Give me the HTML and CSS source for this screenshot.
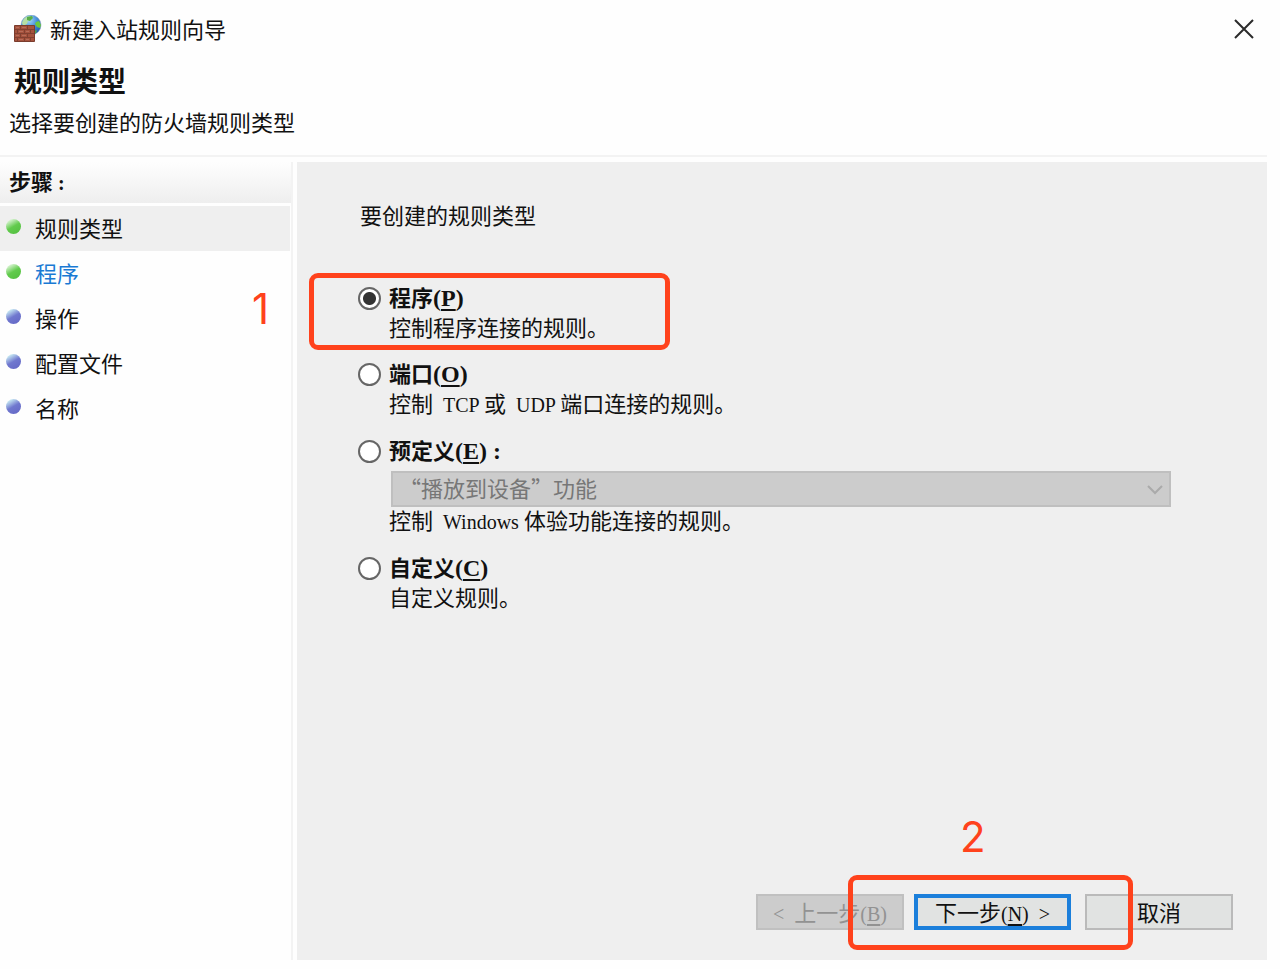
FILE: index.html
```html
<!DOCTYPE html>
<html lang="zh-CN">
<head>
    <meta charset="UTF-8">
    <meta name="viewport" content="width=device-width, initial-scale=1.0">
    <title>新建入站规则向导</title>
    <link rel="stylesheet" href="styles.css">
</head>
<body>
    <div class="wizard">
        <header class="header">
            <div class="title-bar">
                <svg class="app-icon" width="28" height="28" viewBox="0 0 28 28" aria-hidden="true">
                    <defs>
                        <radialGradient id="globe" cx="40%" cy="25%" r="75%">
                            <stop offset="0" stop-color="#a9dcf8"/>
                            <stop offset="0.5" stop-color="#4a92dc"/>
                            <stop offset="1" stop-color="#2258ae"/>
                        </radialGradient>
                    </defs>
                    <circle cx="17" cy="10" r="10" fill="url(#globe)" stroke="#7f9cb8" stroke-width="0.5"/>
                    <path d="M8 8c1-4 4-7 8-7l3 1-2 3-3 1-1 3-4 2z" fill="#b5dfa4"/>
                    <path d="M13 2l5-1 1 2-3 3-3-1z" fill="#56ae49"/>
                    <path d="M22 7l3-1 2 4-1 3-3-1-2-3z" fill="#6bc93f"/>
                    <path d="M20 16l3-1-1 3-2 1z" fill="#54a747"/>
                    <path d="M0.500 10.500h20v16h-20z" fill="#a5523d" stroke="#7a3c2d"/>
                    <path d="M1 14.500h19M1 18.500h19M1 22.500h19M6.500 11v3M13.500 11v3M3.500 15v3M10.500 15v3M16.500 15v3M6.500 19v3M13.500 19v3M3.500 23v3M10.500 23v3M16.500 23v3" stroke="#824030" fill="none"/>
                    <path d="M2 12.500h3M8 12.500h4M5 16.500h4M12 16.500h3M2 20.500h3M8 20.500h4M5 24.500h4M12 24.500h3" stroke="#b66c58" fill="none"/>
                </svg>
                <span class="title">新建入站规则向导</span>
                <button type="button" class="close" aria-label="关闭">
                    <svg width="20" height="20" viewBox="0 0 20 20" aria-hidden="true">
                        <path d="M1 1l18 18M19 1L1 19" stroke="#2b2b2b" stroke-width="2" fill="none"/>
                    </svg>
                </button>
            </div>
            <h1>规则类型</h1>
            <p class="subtitle">选择要创建的防火墙规则类型</p>
        </header>

        <div class="content">
            <nav class="steps">
                <h2>步骤<span class="latin"> :</span></h2>
                <ul>
                    <li class="done active"><span class="dot"></span>规则类型</li>
                    <li class="done"><span class="dot"></span><a href="#program">程序</a></li>
                    <li><span class="dot"></span>操作</li>
                    <li><span class="dot"></span>配置文件</li>
                    <li><span class="dot"></span>名称</li>
                </ul>
                <span class="mark-number mark-one">1</span>
            </nav>

            <main class="panel">
                <form class="rule-form">
                    <p class="question">要创建的规则类型</p>

                    <div class="option">
                        <input type="radio" name="rule" id="program" checked>
                        <label for="program">程序<span class="latin">(<u>P</u>)</span></label>
                        <p>控制程序连接的规则。</p>
                        <span class="mark-box mark-option"></span>
                    </div>

                    <div class="option">
                        <input type="radio" name="rule" id="port">
                        <label for="port">端口<span class="latin">(<u>O</u>)</span></label>
                        <p>控制<span class="latin">  TCP </span>或<span class="latin">  UDP </span>端口连接的规则。</p>
                    </div>

                    <div class="option">
                        <input type="radio" name="rule" id="predefined">
                        <label for="predefined">预定义<span class="latin">(<u>E</u>) :</span></label>
                        <div class="select-wrap">
                            <select aria-label="预定义" disabled>
                                <option>“播放到设备”功能</option>
                            </select>
                            <svg class="arrow" width="16" height="10" viewBox="0 0 16 10" aria-hidden="true">
                                <path d="M1 1l7 7 7-7" stroke="#aaaaaa" stroke-width="2" fill="none"/>
                            </svg>
                        </div>
                        <p>控制<span class="latin">  Windows </span>体验功能连接的规则。</p>
                    </div>

                    <div class="option">
                        <input type="radio" name="rule" id="custom">
                        <label for="custom">自定义<span class="latin">(<u>C</u>)</span></label>
                        <p>自定义规则。</p>
                    </div>
                </form>

                <div class="actions">
                    <button type="button" class="btn" disabled><span class="latin">&lt;  </span>上一步<span class="latin">(<u>B</u>)</span></button>
                    <div class="next-wrap">
                        <button type="button" class="btn btn-next">下一步<span class="latin">(<u>N</u>)  &gt;</span></button>
                        <span class="mark-number mark-two">2</span>
                        <span class="mark-box mark-next"></span>
                    </div>
                    <button type="button" class="btn">取消</button>
                </div>
            </main>
        </div>
    </div>
</body>
</html>
```
FILE: styles.css
```css
:root {
    --panel-color: #efefef;
    --line-color: #f3f3f3;
    --text-color: #111;
    --link-color: #1a7ad4;
    --mark-color: #ff421c;
}

* {
    box-sizing: border-box;
    margin: 0;
    padding: 0;
}

body {
    font-family: "Noto Sans CJK SC", sans-serif;
    font-size: 22px;
    line-height: 28px;
    color: var(--text-color);
    background-color: #fefefe;
}

.wizard {
    display: flex;
    flex-direction: column;
    min-height: 100vh;
    padding: 0 13px 9px 0;
}

.latin {
    font-family: "Liberation Serif", serif;
    font-size: 20px;
    line-height: 1;
    white-space: pre;
}

u {
    text-underline-offset: 3px;
}

.header {
    padding-bottom: 20px;
    border-bottom: 2px solid var(--line-color);
}

.title-bar {
    display: flex;
    align-items: center;
    gap: 8px;
    height: 58px;
    padding: 0 13px 0 14px;
}

.title {
    padding-bottom: 2px;
}

.close {
    display: flex;
    margin-left: auto;
    border: none;
    background: none;
    cursor: pointer;
}

h1 {
    padding-left: 14px;
    font-size: 28px;
    line-height: 44px;
}

.subtitle {
    padding: 5px 0 0 9px;
}

.content {
    display: flex;
    flex: 1;
    gap: 4px;
    padding-top: 5px;
}

.steps {
    position: relative;
    width: 293px;
    flex-shrink: 0;
    border-right: 2px solid var(--line-color);
}

.steps h2 {
    height: 41px;
    padding-left: 9px;
    font-size: 22px;
    line-height: 36px;
    background: linear-gradient(#fefefe, #eeeeee);
}

.steps ul {
    padding: 3px 1px 0 0;
    list-style: none;
}

.steps li {
    display: flex;
    align-items: center;
    gap: 14px;
    height: 45px;
    padding: 0 0 4px 6px;
}

.steps .active {
    background-color: var(--panel-color);
}

.steps a {
    color: var(--link-color);
    text-decoration: none;
}

.dot {
    width: 15px;
    height: 15px;
    border-radius: 50%;
    background: linear-gradient(150deg, #c5e6f2 15%, #7078cf 50%, #6265c4);
}

.done .dot {
    background: linear-gradient(150deg, #d3f2cc 15%, #62cb4d 50%, #51bd3e);
}

.panel {
    display: flex;
    flex-direction: column;
    flex: 1;
    justify-content: space-between;
    padding: 38px 34px 30px 61px;
    background-color: var(--panel-color);
}

.rule-form {
    display: flex;
    flex-direction: column;
    gap: 17px;
}

.question {
    padding: 0 0 38px 2px;
}

.option {
    position: relative;
    display: grid;
    grid-template-columns: 23px 1fr;
    column-gap: 8px;
    align-items: center;
}

.option label {
    padding-bottom: 4px;
    font-weight: bold;
    line-height: 26px;
}

.option label .latin {
    font-size: 24px;
}

.option p {
    padding-bottom: 4px;
    line-height: 24px;
}

.option p,
.select-wrap {
    grid-column: 2;
}

input[type="radio"] {
    appearance: none;
    width: 23px;
    height: 23px;
    border: 2px solid #666;
    border-radius: 50%;
    background-color: #fff;
}

input[type="radio"]:checked {
    background: radial-gradient(circle, #333 6px, #fff 7px);
}

.select-wrap {
    position: relative;
    margin: 4px 62px 0 2px;
}

select {
    display: block;
    appearance: none;
    width: 100%;
    height: 36px;
    padding: 0 36px 4px 6px;
    border: 2px solid #bfbfbf;
    font: inherit;
    color: #777;
    background-color: #cccccc;
}

select:disabled {
    opacity: 1;
}

.arrow {
    position: absolute;
    right: 8px;
    top: 14px;
}

.actions {
    display: flex;
    justify-content: flex-end;
}

.btn {
    width: 148px;
    height: 36px;
    padding-bottom: 2px;
    border: 2px solid #bababa;
    font: inherit;
    line-height: 24px;
    color: var(--text-color);
    background-color: #e1e3e2;
}

.btn:disabled {
    border-color: #c0c0c0;
    color: #929292;
    background-color: #cccccc;
}

.btn-next {
    width: 157px;
    border: 4px solid #1b7fdb;
}

.next-wrap {
    position: relative;
    margin: 0 14px 0 10px;
}

/* red callouts on top of the wizard */
.mark-box {
    position: absolute;
    border: 5px solid var(--mark-color);
    border-radius: 9px;
    pointer-events: none;
}

.mark-option {
    top: -10px;
    left: -49px;
    width: 361px;
    height: 77px;
}

.mark-next {
    top: -19px;
    left: -66px;
    width: 285px;
    height: 75px;
}

.mark-number {
    position: absolute;
    font-family: Inter, sans-serif;
    font-size: 42px;
    line-height: 42px;
    color: var(--mark-color);
}

.mark-one {
    top: 126px;
    right: 22px;
}

.mark-two {
    top: -78px;
    left: 46px;
}
```
